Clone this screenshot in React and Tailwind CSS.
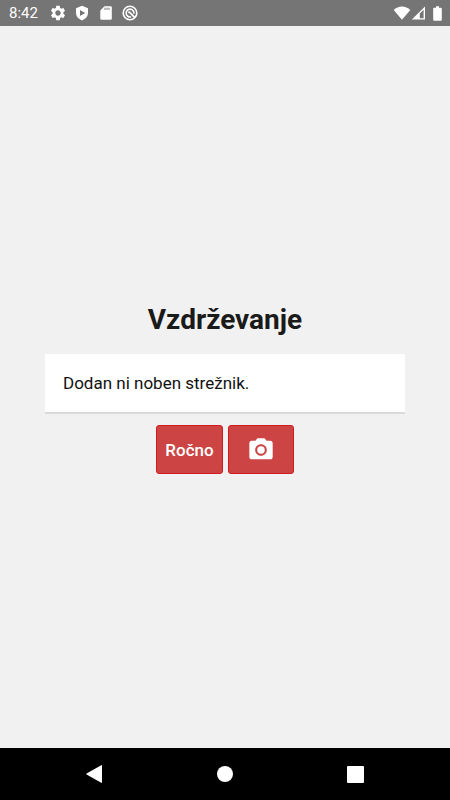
import { MdPhotoCamera, MdSettings } from 'react-icons/md'

// Status bar icons that the icon set does not have
function ShieldIcon() {
  return (
    <svg viewBox="0 0 14 16" className="h-4 w-[14px]" fill="currentColor">
      <path
        fillRule="evenodd"
        d="M7 .8 13 3.200v4.600c0 3.600-2.400 6.300-6 7.600-3.600-1.300-6-4-6-7.600V3.200L7 .8ZM5 5v6L10.200 8 5 5Z"
      />
    </svg>
  )
}

function SdCardIcon() {
  return (
    <svg viewBox="0 0 12 14" className="h-[14px] w-3" fill="currentColor">
      <path d="M4.500 .3H10.600Q11.800 .3 11.800 1.500V12.600Q11.800 13.800 10.600 13.800H1.500Q.3 13.800 .3 12.600V4.500L4.500 .3Z" />
      <path d="M5 1.700v2.200M7 1.700v2.200M9 1.700v2.200" stroke="#757575" strokeWidth="1" />
    </svg>
  )
}

function AgentIcon() {
  return (
    <svg viewBox="0 0 16 16" className="size-4" fill="none" stroke="currentColor">
      <circle cx="8" cy="8" r="6.800" strokeWidth="1.600" />
      <path d="M9 11.800A3.900 3.900 0 1 1 11.900 8.600" strokeWidth="1.600" />
      <path d="M6.200 7.600Q7.200 6.800 8.200 7.800L12.600 12.400" strokeWidth="1.800" />
    </svg>
  )
}

function WifiIcon() {
  return (
    <svg viewBox="0 0 18 14" className="h-[14px] w-[18px]" fill="currentColor">
      <path d="M9 13.700 .7 3.900C3 1.800 6 .4 9 .4s6 1.400 8.300 3.500L9 13.700Z" />
    </svg>
  )
}

function SignalIcon() {
  return (
    <svg viewBox="0 0 15 14" className="h-[14px] w-[15px]" fill="currentColor">
      <path fillRule="evenodd" d="M14 .4V13.600H.8L14 .4ZM12.600 3.800 8.800 7.600V12.200H12.600V3.800Z" />
    </svg>
  )
}

function BatteryIcon() {
  return (
    <svg viewBox="0 0 9 15" className="h-[15px] w-[9px]" fill="currentColor">
      <path d="M3 .3H6V1.800H7.800Q8.800 1.800 8.800 2.800V13.700Q8.800 14.700 7.800 14.700H1.200Q.2 14.700 .2 13.700V2.800Q.2 1.800 1.200 1.800H3Z" />
    </svg>
  )
}

function StatusBar() {
  return (
    <header className="flex h-[26px] items-center justify-between bg-[#757575] pr-2 pl-[9px] text-white">
      <div className="flex items-center">
        <span className="w-[37px] text-[15px]">8:42</span>
        <div className="grid grid-cols-[repeat(4,24px)] place-items-center">
          <MdSettings className="size-[18px]" />
          <ShieldIcon />
          <SdCardIcon />
          <AgentIcon />
        </div>
      </div>
      <div className="flex items-center">
        <WifiIcon />
        <SignalIcon />
        <span className="ml-[7px]">
          <BatteryIcon />
        </span>
      </div>
    </header>
  )
}

function NavigationBar() {
  return (
    <nav className="grid h-[52px] grid-cols-3 place-items-center bg-black px-[30px] text-white">
      <button type="button" aria-label="Nazaj">
        <svg viewBox="0 0 18 20" className="h-5 w-[18px]" fill="currentColor">
          <path d="M15.200 1.200Q16 .8 16 1.700V18.300Q16 19.200 15.200 18.800L.6 10.500Q0 10 .6 9.500Z" />
        </svg>
      </button>
      <button type="button" aria-label="Domov" className="size-4 rounded-full bg-white" />
      <button type="button" aria-label="Pregled" className="size-[17px] rounded-[1px] bg-white" />
    </nav>
  )
}

function App() {
  const servers = []

  return (
    <div className="flex min-h-screen flex-col bg-[#f1f1f1] font-[Roboto,sans-serif] text-[#1a1a1a]">
      <StatusBar />

      <main className="flex flex-1 flex-col items-center justify-center pt-[2px]">
        <h1 className="mb-4 text-[28px] leading-9 font-bold">Vzdrževanje</h1>

        {/* Server list */}
        <div className="w-4/5 bg-white px-[18px] py-4 text-[17px] leading-[26px] text-[#111111] shadow-[0_2px_0_#dadada]">
          {servers.length === 0 ? (
            <p>Dodan ni noben strežnik.</p>
          ) : (
            servers.map((server) => <p key={server}>{server}</p>)
          )}
        </div>

        <div className="mt-[13px] flex gap-[5px]">
          <button
            type="button"
            className="h-[49px] rounded-[3px] border border-[#d01c1f] bg-[#cc4444] px-2 pt-[2px] text-[17px] font-medium text-white"
          >
            Ročno
          </button>
          <button
            type="button"
            aria-label="Kamera"
            className="flex h-[49px] w-[66px] items-center justify-center rounded-[3px] border border-[#d01c1f] bg-[#cc4444] text-white"
          >
            <MdPhotoCamera className="size-7" />
          </button>
        </div>
      </main>

      <NavigationBar />
    </div>
  )
}

export default App
